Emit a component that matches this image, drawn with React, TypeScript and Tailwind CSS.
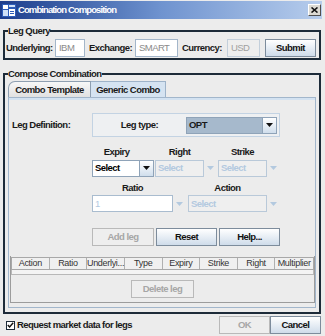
import React from 'react';

const Tri = ({ color }: { color: string }) => (
  <svg width="7" height="4" viewBox="0 0 7 4">
    <path d="M0 0h7L3.5 4z" fill={color} />
  </svg>
);

type ComboState = 'enabled' | 'disabled' | 'highlight' | 'editable';

const Combo = ({ text, className, state }: { text: string; className: string; state: ComboState }) => {
  const off = state === 'disabled' || state === 'editable';
  const field =
    state === 'highlight'
      ? 'bg-[#a6b9cc] border-[#8fa3b8] text-[#1a1a1a] font-bold'
      : state === 'enabled'
        ? 'bg-white border-[#8fa3b8] text-black font-bold'
        : state === 'editable'
          ? 'bg-white border-[#a9bccf] text-[#b3c9df]'
          : 'bg-[#efefef] border-[#b9c9d9] text-[#b3c9df] font-bold';
  return (
    <div className={`flex h-[17px] ${className}`}>
      <div className={`flex-1 flex items-center border px-[2px] ${field}`}>{text}</div>
      {off ? (
        <div className="w-[13px] flex items-center justify-center">
          <Tri color="#b3c9df" />
        </div>
      ) : (
        <div className="w-[14px] flex items-center justify-center border border-l-0 border-[#8fa3b8] bg-linear-to-b from-white to-[#d0deec]">
          <Tri color="#111" />
        </div>
      )}
    </div>
  );
};

const Btn = ({ label, className, disabled = false }: { label: string; className: string; disabled?: boolean }) => (
  <button
    className={`flex items-center justify-center h-[18px] border font-bold ${
      disabled
        ? 'border-[#b9b9b9] bg-[#eeeeee] text-[#a6a6a6]'
        : 'border-[#7d8c9c] bg-linear-to-b from-white to-[#cfdcea] text-[#111]'
    } ${className}`}
  >
    {label}
  </button>
);

const Input = ({ value, className, off = false }: { value: string; className: string; off?: boolean }) => (
  <div
    className={`h-[18px] flex items-center px-[3px] border font-normal text-[#8a8a8a] ${
      off ? 'bg-[#eeeeee] border-[#c3cfdb]' : 'bg-white border-[#a3b6ca]'
    } ${className}`}
  >
    {value}
  </div>
);

const columns = ['Action', 'Ratio', 'Underlyi...', 'Type', 'Expiry', 'Strike', 'Right', 'Multiplier'];

export default function App() {
  return (
    <div className="w-[325px] h-[336px] bg-[#ececec] flex flex-col overflow-hidden font-['Liberation_Sans',Arial,sans-serif] text-[9.5px] tracking-[-0.55px] text-[#1a1a1a] leading-none">
      {/* title bar */}
      <div className="h-[18px] mt-[1px] mr-[3px] flex items-center bg-linear-to-r from-[#1d3d8c] via-[#6f93cf] to-[#b7cdec]">
        <svg width="14" height="13" viewBox="0 0 14 13" className="ml-[2px]">
          <rect x="0" y="0" width="14" height="13" fill="#2c5cb8" />
          <rect x="1" y="1" width="5" height="4" fill="#fff" />
          <rect x="7" y="1" width="6" height="2" fill="#cfe0f7" />
          <rect x="1" y="6" width="5" height="6" fill="#cfe0f7" />
          <rect x="7" y="5" width="6" height="7" fill="#fff" />
          <rect x="8" y="7" width="4" height="1" fill="#2c5cb8" />
          <rect x="8" y="9" width="4" height="1" fill="#2c5cb8" />
        </svg>
        <span className="ml-[2px] text-white font-bold text-[9.5px] tracking-[-0.9px]">Combination Composition</span>
        <div className="ml-auto mr-[1px] w-[13px] h-[12px] flex items-center justify-center bg-[#dcdad3] border border-t-white border-l-white border-r-[#505050] border-b-[#505050]">
          <svg width="7" height="6" viewBox="0 0 7 6">
            <path d="M0.5 0.5L6.5 5.5M6.5 0.5L0.5 5.5" stroke="#111" strokeWidth="1.6" />
          </svg>
        </div>
      </div>

      <div className="flex flex-col pl-[3px] pr-[4px]">
        {/* Leg Query */}
        <fieldset className="mt-[6px] border-2 border-[#1d2b39] px-0 pb-[1px]">
          <legend className="ml-[3px] px-0 font-bold leading-[12px]">Leg Query</legend>
          <div className="flex items-center mt-[2px] font-bold">
            <span className="w-[50px] pl-[1px]">Underlying:</span>
            <Input value="IBM" className="w-[30px]" />
            <span className="w-[50px] pl-[4px]">Exchange:</span>
            <Input value="SMART" className="w-[43px]" />
            <span className="w-[49px] pl-[4px]">Currency:</span>
            <Input value="USD" className="w-[33px] text-[#a0a0a0]" off />
            <Btn label="Submit" className="ml-[5px] w-[51px]" />
          </div>
        </fieldset>

        {/* Compose Combination */}
        <fieldset className="mt-[8px] border-2 border-[#1d2b39] px-[3px] pb-[4px]">
          <legend className="px-0 font-bold leading-[12px]">Compose Combination</legend>
          <div className="flex h-[16px] mt-[1px]">
            <div className="w-[83px] flex items-center justify-center font-bold border border-b-0 border-[#8e9fb1] rounded-tl-[7px] bg-linear-to-b from-[#f7f7f7] to-[#e1e1e1]">
              Combo Template
            </div>
            <div className="w-[75px] flex items-center justify-center font-bold border border-b-0 border-l-0 border-[#9eb3c9] bg-[#d5e3f1]">
              Generic Combo
            </div>
          </div>
          <div className="h-[211px] border border-[#a2b6cb] shadow-[inset_0_2px_0_#d3e2f1] flex flex-col">
            {/* leg definition */}
            <div className="flex items-center mt-[15px]">
              <span className="w-[83px] pl-[3px] font-bold">Leg Definition:</span>
              <div className="w-[188px] h-[24px] flex items-center border border-[#c3d3e3] bg-[#eef0f2]">
                <span className="flex-1 text-center font-bold">Leg type:</span>
                <Combo text="OPT" className="w-[91px] mr-[2px]" state="highlight" />
              </div>
            </div>

            {/* expiry / right / strike */}
            <div className="flex ml-[83px] mt-[10px] gap-[1px] font-bold">
              <span className="w-[62px] pr-[13px] text-center">Expiry</span>
              <span className="w-[62px] pr-[13px] text-center">Right</span>
              <span className="w-[62px] pr-[13px] text-center">Strike</span>
            </div>
            <div className="flex ml-[83px] mt-[3px] gap-[1px]">
              <Combo text="Select" className="w-[62px]" state="enabled" />
              <Combo text="Select" className="w-[62px]" state="disabled" />
              <Combo text="Select" className="w-[62px]" state="disabled" />
            </div>

            {/* ratio / action */}
            <div className="flex ml-[83px] mt-[6px] gap-[2px] font-bold">
              <span className="w-[94px] pr-[13px] text-center">Ratio</span>
              <span className="w-[92px] pr-[13px] text-center">Action</span>
            </div>
            <div className="flex ml-[83px] mt-[3px] gap-[2px]">
              <Combo text="1" className="w-[94px]" state="editable" />
              <Combo text="Select" className="w-[92px]" state="disabled" />
            </div>

            {/* buttons */}
            <div className="flex ml-[83px] mt-[16px] gap-[2px]">
              <Btn label="Add leg" className="w-[62px]" disabled />
              <Btn label="Reset" className="w-[61px]" />
              <Btn label="Help..." className="w-[61px]" />
            </div>

            {/* legs table */}
            <div className="ml-[1px] mt-[10px] w-[305px] border border-[#9c9c9c] border-t-0 flex flex-col pt-[1px]">
              <div className="grid grid-cols-8 h-[13px] border border-[#a8a8a8] bg-[#f0f0f0] font-normal text-[9px] tracking-[-0.3px] text-[#333]">
                {columns.map((c) => (
                  <div key={c} className="flex items-center justify-center border-r border-[#b0b0b0] last:border-r-0 whitespace-nowrap">
                    {c}
                  </div>
                ))}
              </div>
              <div className="h-[5px] border-x border-b border-[#b8b8b8] bg-[#f4f4f4]" />
              <div className="flex justify-center mt-[5px] mb-[4px]">
                <Btn label="Delete leg" className="w-[63px]" disabled />
              </div>
            </div>
          </div>
        </fieldset>
      </div>

      {/* bottom row */}
      <div className="flex items-center h-[18px] mt-[2px] pr-[4px]">
        <div className="ml-[6px] w-[9px] h-[9px] border border-[#1d2b39] bg-white flex items-center justify-center">
          <svg width="7" height="6" viewBox="0 0 7 6">
            <path d="M0.8 3L2.6 5L6.2 0.8" stroke="#111" strokeWidth="1.4" fill="none" />
          </svg>
        </div>
        <span className="ml-[2px] font-bold">Request market data for legs</span>
        <Btn label="OK" className="ml-auto w-[51px] h-[18px]" disabled />
        <Btn label="Cancel" className="w-[51px]" />
      </div>
    </div>
  );
}
